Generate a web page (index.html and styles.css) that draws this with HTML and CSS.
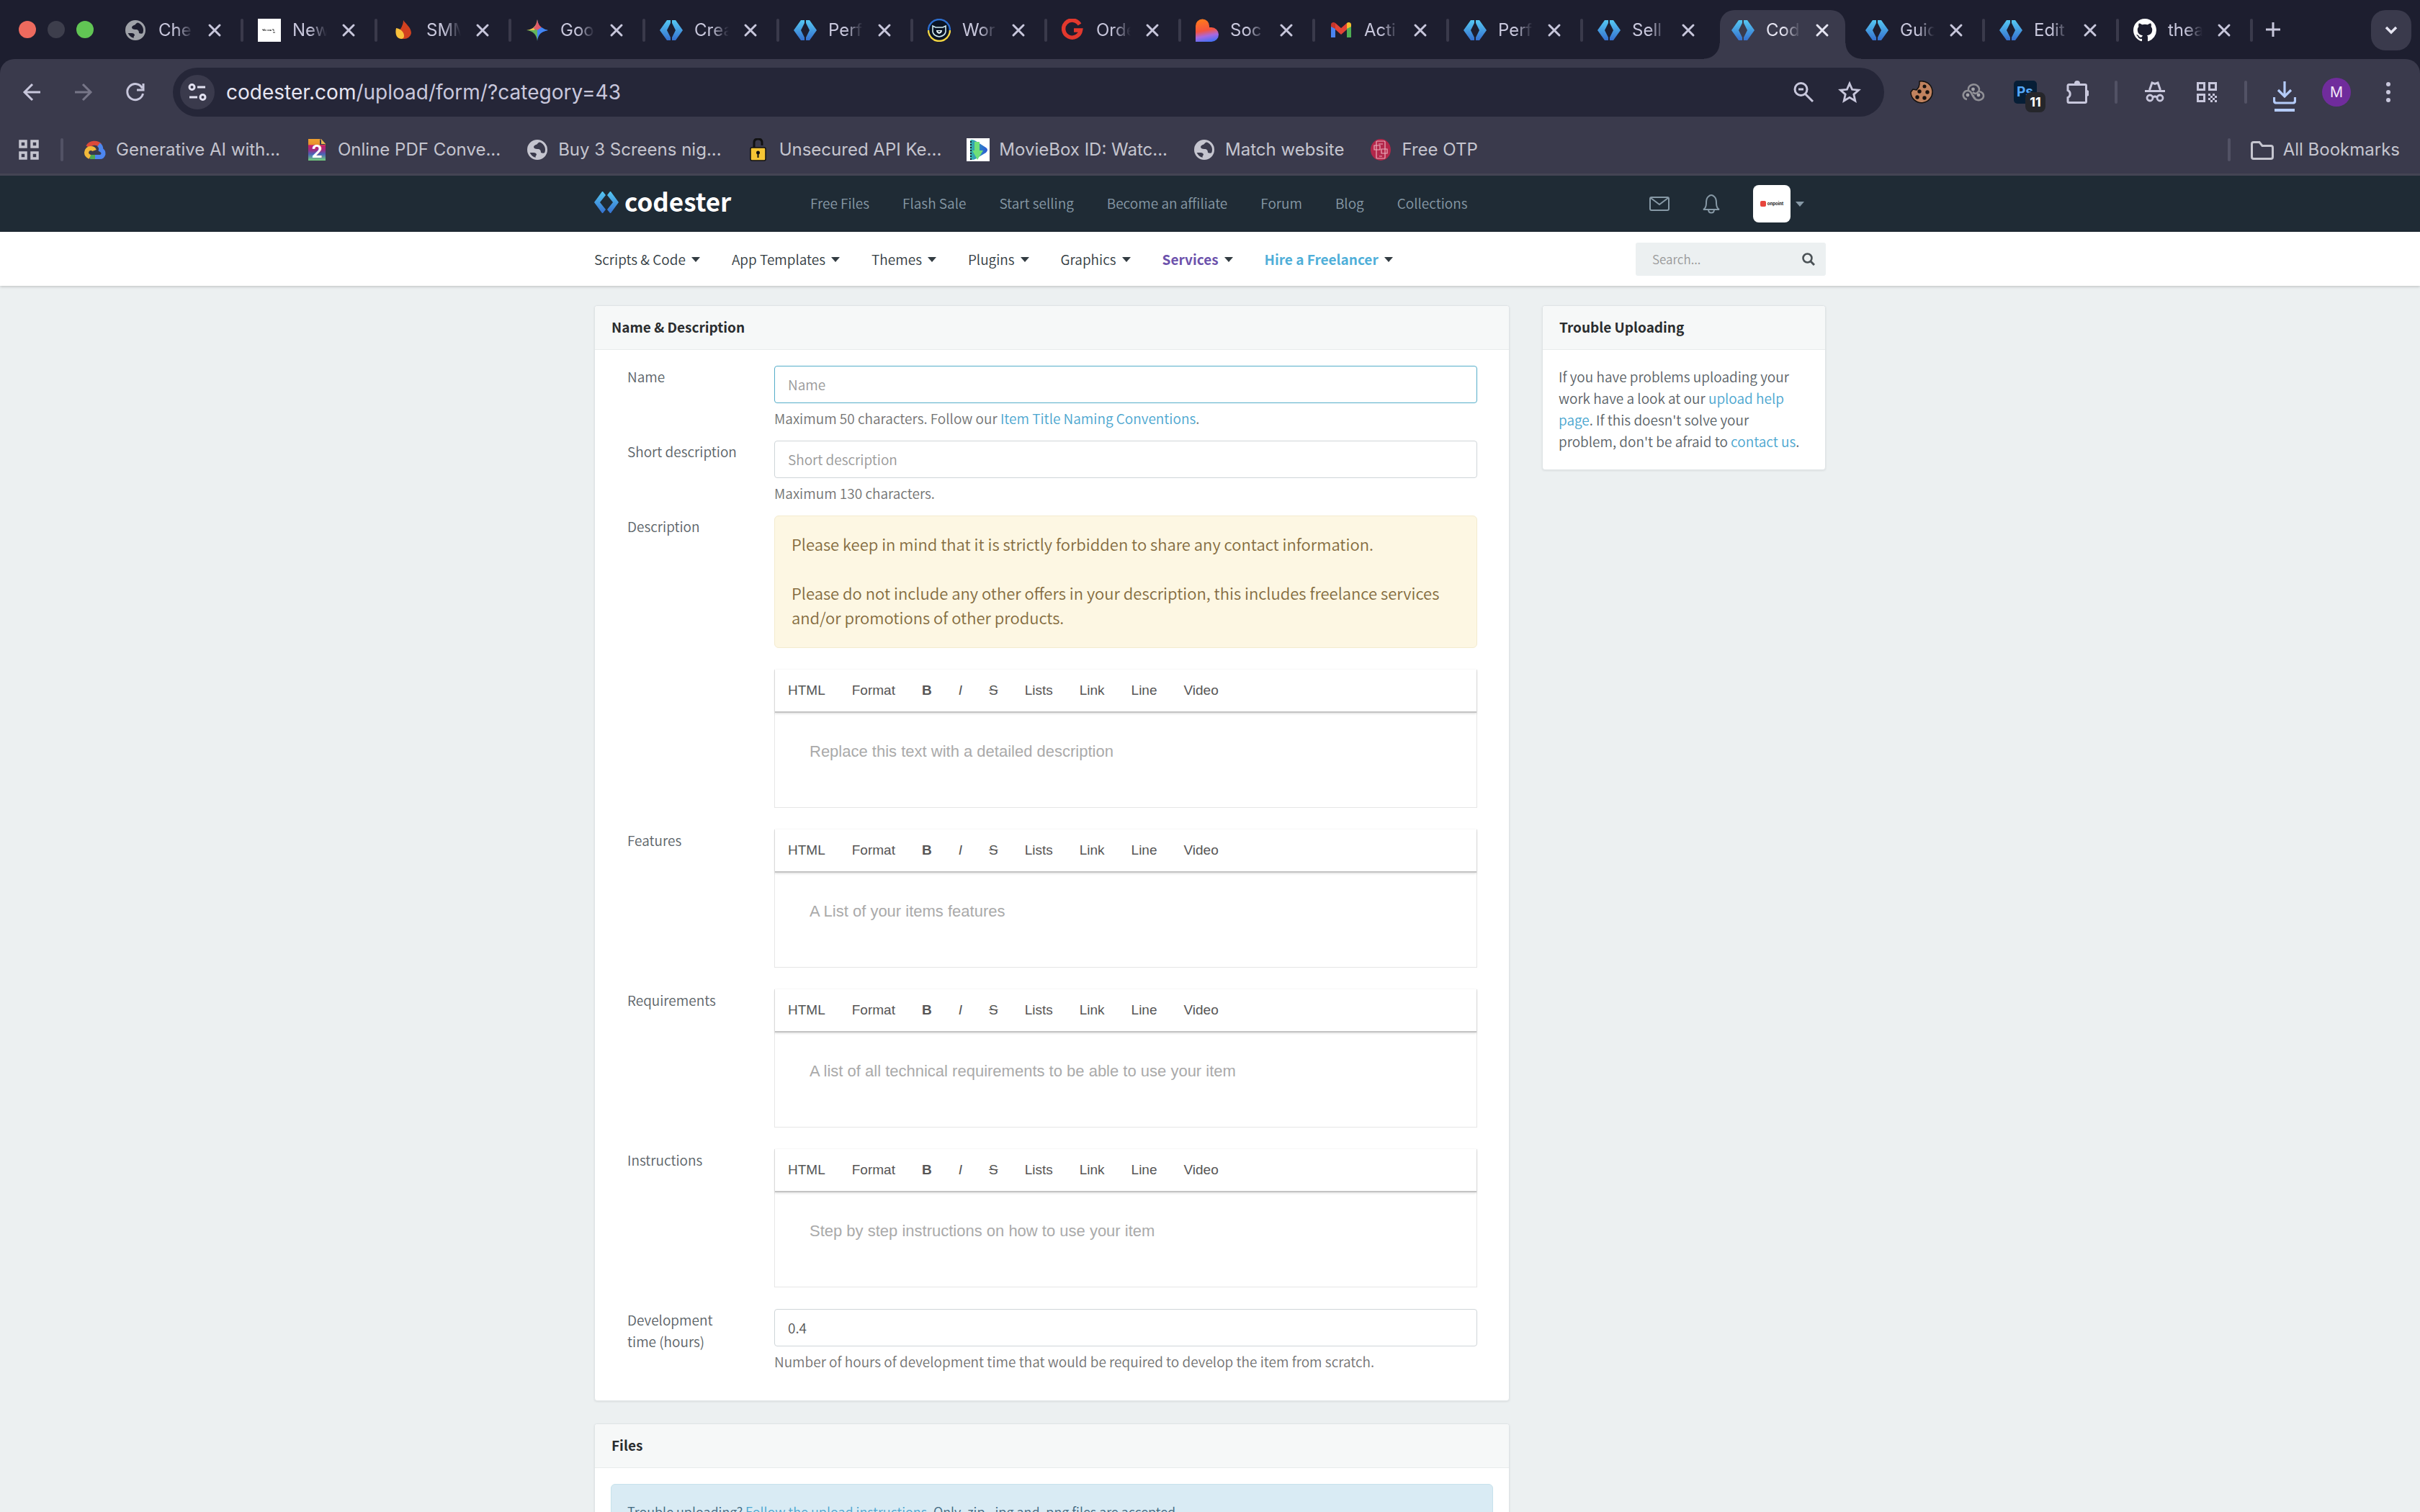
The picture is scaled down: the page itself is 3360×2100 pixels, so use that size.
FILE: index.html
```html
<!DOCTYPE html>
<html lang="en">
<head>
<meta charset="utf-8">
<title>Codester - Upload</title>
<link rel="stylesheet" href="styles.css">
</head>
<body>
<svg class="sprite" width="0" height="0" aria-hidden="true">
  <defs>
    <linearGradient id="g-blue" x1="0" y1="0" x2="0" y2="1"><stop offset="0" stop-color="#55c8f2"/><stop offset="1" stop-color="#3570cf"/></linearGradient>
    <linearGradient id="g-heart" x1="0.3" y1="0" x2="0.5" y2="1"><stop offset="0" stop-color="#ff7a1c"/><stop offset=".5" stop-color="#f5543f"/><stop offset=".75" stop-color="#a868e0"/><stop offset="1" stop-color="#4a70f5"/></linearGradient>
    <linearGradient id="g-pdf" x1="0" y1="0" x2="0" y2="1"><stop offset="0" stop-color="#f0a030"/><stop offset=".25" stop-color="#e8902c"/><stop offset=".3" stop-color="#c81e6a"/><stop offset=".5" stop-color="#a02a80"/><stop offset=".7" stop-color="#4a62b8"/><stop offset="1" stop-color="#74d07c"/></linearGradient>
    <linearGradient id="g-ua" x1="0" y1="0" x2="0" y2="1"><stop offset=".5" stop-color="#2d6fd0"/><stop offset=".5" stop-color="#f5d742"/></linearGradient>
    <linearGradient id="g-movie" x1="0" y1="0" x2="1" y2="0"><stop offset="0" stop-color="#35b7a8"/><stop offset="1" stop-color="#2b58d8"/></linearGradient>
    <symbol id="globe" viewBox="0 0 32 32"><circle cx="16" cy="16" r="12.5" fill="none" stroke="currentColor" stroke-width="3"/><path fill="currentColor" d="M3 14C5 7 10 3 16 3l4 1c-1 2-3 2-4 4-1 1-4 1-5 4 0 2 2 3 5 3 4 0 5 2 5 5 2 1 4 1 6 0-2 5-6 8-12 8-2-1-2-3 0-5 0-2-2-3-4-3H5c-2-2-2-4-2-6z"/></symbol>
    <symbol id="cheap" viewBox="0 0 32 32"><rect width="32" height="32" fill="#fff"/><path d="M6 15q3 0 2 2M9 14v3M11 15v2M13 16h5v1M18 15v2M20 15h2v2M21 19h3" fill="none" stroke="#333" stroke-width="1"/></symbol>
    <symbol id="flame" viewBox="0 0 32 32"><path d="M16 2c3 5 11 10 11 18a10 9 0 0 1-11 8C9 28 7 24 10 18c2-4 6-9 6-16z" fill="#d2411f"/><path d="M6 13c6 1 11 5 11 11 0 2-1 3-3 4-7 0-10-6-8-15z" fill="#f9c13c"/></symbol>
    <symbol id="gem" viewBox="0 0 32 32"><path d="M16 1c1 9 6 14 15 15-9 1-14 6-15 15z" fill="#4285f4"/><path d="M16 1C15 10 10 15 1 16c9 1 14 6 15 15z" fill="#63b45b"/><path d="M16 1C15 10 10 15 1 16h11z" fill="#f3c14a"/><path d="M16 1c-1 7-3 10-6 12l6 3 6-4c-4-3-5-6-6-11z" fill="#e05a6a"/><path d="M16 16 22 12c3 2 5 3 9 4-4 1-8 2-10 4l-5 2z" fill="#4285f4"/></symbol>
    <symbol id="code" viewBox="0 0 32 32"><path d="M10 2h5v4l-5 10 5 10v4h-5L0 16zM22 2h-5v4l5 10-5 10v4h5l10-14z" fill="url(#g-blue)"/></symbol>
    <symbol id="brackets" viewBox="0 0 34 30"><path d="M11 0h1l4 5-8 10 8 10-4 5h-1L0 15zM23 0h-1l-4 5 8 10-8 10 4 5h1l11-15z" fill="url(#g-blue)"/></symbol>
    <symbol id="bear" viewBox="0 0 32 32"><circle cx="16" cy="16" r="15" fill="#0a1424" stroke="url(#g-ua)" stroke-width="2.4"/><path d="M7 10l4 2h10l4-2v8q-1 6-9 7-8-1-9-7z" fill="none" stroke="#cfeaf0" stroke-width="1.6"/><path d="M12 16h8q0 4-4 5-4-1-4-5z" fill="#e6f6f8"/><path d="M14 17h4l-2 2z" fill="#0a1424"/></symbol>
    <symbol id="gred" viewBox="0 0 32 32"><path d="M25 8A12 12 0 1 0 26.500 16H17" fill="none" stroke="#e2382d" stroke-width="5.500"/></symbol>
    <symbol id="heart" viewBox="0 0 32 32"><path d="M0 32V10a9.500 9.500 0 0 1 19 0v2h3a10 10 0 0 1 0 20z" fill="url(#g-heart)"/></symbol>
    <symbol id="gmail" viewBox="0 0 32 32"><path d="M2 8v18h6V14z" fill="#4a84f0"/><path d="M30 8v18h-6V14z" fill="#4fae54"/><path d="M2 8c0-3 4-4 6-2v8L2 11z" fill="#c5352b"/><path d="M8 6l8 7 8-7v9l-8 7-8-7z" fill="#e34335"/><path d="M30 8c0-3-4-4-6-2v8l6-3z" fill="#f4bd2e"/></symbol>
    <symbol id="github" viewBox="0 0 24 24"><path fill="#fff" d="M12 0C5.370 0 0 5.370 0 12c0 5.300 3.440 9.800 8.200 11.390.6.110.82-.26.82-.58v-2.030c-3.340.73-4.040-1.610-4.040-1.610-.55-1.390-1.330-1.760-1.330-1.760-1.090-.74.080-.73.080-.73 1.200.080 1.840 1.240 1.840 1.240 1.070 1.830 2.810 1.300 3.490.99.110-.78.420-1.300.76-1.600-2.660-.3-5.470-1.330-5.470-5.930 0-1.310.47-2.380 1.240-3.220-.13-.3-.54-1.520.12-3.180 0 0 1-.32 3.300 1.230a11.500 11.500 0 0 1 6 0c2.300-1.550 3.300-1.230 3.300-1.230.66 1.660.25 2.880.12 3.180.77.840 1.230 1.910 1.230 3.220 0 4.610-2.800 5.620-5.480 5.920.43.370.81 1.100.81 2.220v3.290c0 .32.220.7.830.58A12 12 0 0 0 24 12C24 5.370 18.630 0 12 0z"/></symbol>
    <symbol id="x" viewBox="0 0 32 32"><path d="m9 9 14 14M23 9 9 23" stroke="currentColor" stroke-width="3" stroke-linecap="round"/></symbol>
    <symbol id="caret" viewBox="0 0 12 7"><path d="M0 0h12L6 7z" fill="currentColor"/></symbol>
  </defs>
</svg>

<div class="browser">
  <div class="tabstrip">
    <div class="lights"><i class="light red"></i><i class="light grey"></i><i class="light green"></i></div>
    <div class="tab"><svg class="fav globe"><use href="#globe"/></svg><span class="tab-title">Che</span><button class="close" aria-label="Close"><svg><use href="#x"/></svg></button></div><i class="tab-sep"></i>
    <div class="tab"><svg class="fav"><use href="#cheap"/></svg><span class="tab-title">New</span><button class="close" aria-label="Close"><svg><use href="#x"/></svg></button></div><i class="tab-sep"></i>
    <div class="tab"><svg class="fav"><use href="#flame"/></svg><span class="tab-title">SMM</span><button class="close" aria-label="Close"><svg><use href="#x"/></svg></button></div><i class="tab-sep"></i>
    <div class="tab"><svg class="fav"><use href="#gem"/></svg><span class="tab-title">Goo</span><button class="close" aria-label="Close"><svg><use href="#x"/></svg></button></div><i class="tab-sep"></i>
    <div class="tab"><svg class="fav"><use href="#code"/></svg><span class="tab-title">Crea</span><button class="close" aria-label="Close"><svg><use href="#x"/></svg></button></div><i class="tab-sep"></i>
    <div class="tab"><svg class="fav"><use href="#code"/></svg><span class="tab-title">Perf</span><button class="close" aria-label="Close"><svg><use href="#x"/></svg></button></div><i class="tab-sep"></i>
    <div class="tab"><svg class="fav"><use href="#bear"/></svg><span class="tab-title">Wor</span><button class="close" aria-label="Close"><svg><use href="#x"/></svg></button></div><i class="tab-sep"></i>
    <div class="tab"><svg class="fav"><use href="#gred"/></svg><span class="tab-title">Orde</span><button class="close" aria-label="Close"><svg><use href="#x"/></svg></button></div><i class="tab-sep"></i>
    <div class="tab"><svg class="fav"><use href="#heart"/></svg><span class="tab-title">Soc</span><button class="close" aria-label="Close"><svg><use href="#x"/></svg></button></div><i class="tab-sep"></i>
    <div class="tab"><svg class="fav"><use href="#gmail"/></svg><span class="tab-title">Acti</span><button class="close" aria-label="Close"><svg><use href="#x"/></svg></button></div><i class="tab-sep"></i>
    <div class="tab"><svg class="fav"><use href="#code"/></svg><span class="tab-title">Perf</span><button class="close" aria-label="Close"><svg><use href="#x"/></svg></button></div><i class="tab-sep"></i>
    <div class="tab"><svg class="fav"><use href="#code"/></svg><span class="tab-title">Sell</span><button class="close" aria-label="Close"><svg><use href="#x"/></svg></button></div><i class="tab-sep clear"></i>
    <div class="tab active"><svg class="fav"><use href="#code"/></svg><span class="tab-title">Cod</span><button class="close" aria-label="Close"><svg><use href="#x"/></svg></button></div><i class="tab-sep clear"></i>
    <div class="tab"><svg class="fav"><use href="#code"/></svg><span class="tab-title">Guid</span><button class="close" aria-label="Close"><svg><use href="#x"/></svg></button></div><i class="tab-sep"></i>
    <div class="tab"><svg class="fav"><use href="#code"/></svg><span class="tab-title">Edit</span><button class="close" aria-label="Close"><svg><use href="#x"/></svg></button></div><i class="tab-sep"></i>
    <div class="tab"><svg class="fav"><use href="#github"/></svg><span class="tab-title">thea</span><button class="close" aria-label="Close"><svg><use href="#x"/></svg></button></div><i class="tab-sep"></i>
    <button class="new-tab" aria-label="New tab"><svg viewBox="0 0 32 32"><path d="M16 6v20M6 16h20" stroke="currentColor" stroke-width="3"/></svg></button>
    <button class="tab-list" aria-label="Search tabs"><svg viewBox="0 0 32 32"><path d="m9 12 7 7 7-7" fill="none" stroke="currentColor" stroke-width="3.500"/></svg></button>
  </div>

  <div class="toolbar">
    <button class="tool" aria-label="Back"><svg viewBox="0 0 32 32"><path d="M28 16H6M17 5 6 16l11 11" fill="none" stroke="currentColor" stroke-width="3"/></svg></button>
    <button class="tool dim" aria-label="Forward"><svg viewBox="0 0 32 32"><path d="M4 16h22M15 5l11 11-11 11" fill="none" stroke="currentColor" stroke-width="3"/></svg></button>
    <button class="tool" aria-label="Reload"><svg viewBox="0 0 32 32"><path d="M25.500 10.500A11 11 0 1 0 26.500 18M27 4v9h-9" fill="none" stroke="currentColor" stroke-width="3"/></svg></button>
    <div class="omnibox">
      <button class="site-info" aria-label="Site information"><svg viewBox="0 0 32 32"><g fill="none" stroke="currentColor" stroke-width="3"><circle cx="8.500" cy="9" r="3.500"/><path d="M16 9h11M5 23h11"/><circle cx="23.500" cy="23" r="3.500"/></g></svg></button>
      <div class="url"><b>codester.com</b>/upload/form/?category=43</div>
      <button class="inner" aria-label="Zoom"><svg viewBox="0 0 32 32"><g fill="none" stroke="currentColor" stroke-width="3"><circle cx="12.500" cy="12" r="8.500"/><path d="M9 12h7M18.500 18.500 29 29"/></g></svg></button>
      <button class="inner" aria-label="Bookmark"><svg viewBox="0 0 32 32"><path d="m16 4 3.600 8.300 9 .8-6.800 6 2 8.900L16 23.300 8.200 28l2-8.900-6.800-6 9-.8z" fill="none" stroke="currentColor" stroke-width="2.800"/></svg></button>
    </div>
    <button class="tool" aria-label="Cookie"><svg viewBox="0 0 32 32"><path d="M13 1a15 15 0 1 1-12 15l3-4 5 1 3-4 1-4z" fill="#c0825e" stroke="#14110f" stroke-width="1.500"/><g fill="#17120f"><circle cx="20" cy="8" r="2.500"/><circle cx="13" cy="15" r="2.700"/><circle cx="24" cy="16" r="2.700"/><circle cx="10" cy="23" r="2.700"/><circle cx="20" cy="24" r="2.700"/></g></svg></button>
    <button class="tool" aria-label="Clouds"><svg viewBox="0 0 32 32"><g fill="none" stroke="#909096" stroke-width="2.600"><path d="M9 13a7.500 6.500 0 1 1 12 4q-3 2-6-1"/><path d="M7 26a6 6 0 1 1 6-9q3 7 6 8"/><path d="M16 20a7 6 0 1 0 8-5"/></g><g fill="#a5a5aa"><circle cx="15.500" cy="12" r="2.400"/><circle cx="8" cy="20" r="2.400"/><circle cx="23" cy="20" r="2.400"/></g></svg></button>
    <button class="tool ps" aria-label="Extension"><span class="ps-box">Ps</span><span class="badge">11</span></button>
    <button class="tool" aria-label="Extensions"><svg viewBox="0 0 32 32"><path d="M5 5.500h22a1.500 1.500 0 0 1 1.500 1.500v22a1.500 1.500 0 0 1-1.500 1.500H4.500A1.500 1.500 0 0 1 3 29v-5.500a5.500 5.500 0 0 0 0-10V7a1.500 1.500 0 0 1 2-1.500z" fill="none" stroke="currentColor" stroke-width="3"/><path d="M12 4a4 4 0 0 1 8 0zM29 13a4 4 0 0 1 0 9z" fill="currentColor"/></svg></button>
    <i class="bar-sep"></i>
    <button class="tool" aria-label="Incognito"><svg viewBox="0 0 32 32"><path d="M2 14.500h28" stroke="currentColor" stroke-width="3"/><path d="M8.500 13 12 3l4 1.500L20 3l3.500 10" fill="none" stroke="currentColor" stroke-width="3"/><g fill="none" stroke="currentColor" stroke-width="2.800"><circle cx="9" cy="24" r="4"/><circle cx="23" cy="24" r="4"/><path d="M13 23q3-2 6 0"/></g></svg></button>
    <button class="tool" aria-label="QR code"><svg viewBox="0 0 32 32"><g fill="none" stroke="currentColor" stroke-width="3"><path d="M3.500 3.500h9v9h-9zM19.500 3.500h9v9h-9zM3.500 19.500h9v9h-9z"/></g><path fill="currentColor" d="M18 18h3v3h-3zM24 18h3v3h-3zM21 21h3v3h-3zM27 21h3v3h-3zM18 24h3v3h-3zM24 24h3v3h-3zM21 27h3v3h-3zM27 27h3v3h-3z"/></svg></button>
    <i class="bar-sep"></i>
    <button class="tool" aria-label="Downloads"><svg class="download" viewBox="0 0 32 44"><path d="M16 1v20M7 13l9 9 9-9M1.500 23v5q0 3 3 3h23q3 0 3-3v-5" fill="none" stroke="#b4cbf8" stroke-width="3.200"/><path d="M2 39h28v4H2z" fill="#b4cbf8"/></svg></button>
    <button class="tool" aria-label="Profile"><span class="profile">M</span></button>
    <button class="tool" aria-label="Menu"><svg viewBox="0 0 32 32"><g fill="currentColor"><circle cx="16" cy="5" r="3"/><circle cx="16" cy="16" r="3"/><circle cx="16" cy="27" r="3"/></g></svg></button>
  </div>

  <nav class="bookmarks" aria-label="Bookmarks">
    <svg class="ico" viewBox="0 0 32 32"><path d="M4 4h8v8H4zM20 4h8v8h-8zM4 20h8v8H4zM20 20h8v8h-8z" fill="none" stroke="currentColor" stroke-width="3.500"/></svg>
    <i class="bar-sep"></i>
    <div class="marks">
      <a class="mark" href="#"><svg class="ico" viewBox="0 0 32 32"><g fill="none" stroke-width="6"><path d="M6 12a10.500 10 0 0 1 17-2" stroke="#dc4a3a"/><path d="M21 9q4 3 3 7 4 2 3.500 6-1 4-5 4H16" stroke="#4d86f0"/><path d="M16 26H9" stroke="#4fa851"/><path d="M9 26q-5-2-5-6 1-6 6-6 4 0 5 3" stroke="#f2b93b"/></g></svg><span>Generative AI with...</span></a>
      <a class="mark" href="#"><svg class="ico" viewBox="0 0 32 32"><path d="M4 1h17l7 7v23H4z" fill="url(#g-pdf)"/><path d="M20 1l8 8h-8z" fill="#3a3a4c"/><path d="M22 1l6 7h-6z" fill="#e8b850"/><text x="16" y="27" text-anchor="middle" class="pdf-two">2</text></svg><span>Online PDF Conve...</span></a>
      <a class="mark" href="#"><svg class="ico"><use href="#globe"/></svg><span>Buy 3 Screens nig...</span></a>
      <a class="mark" href="#"><svg class="ico" viewBox="0 0 32 32"><path d="M10 14V6q0-5 5.500-5T21 6v4" fill="none" stroke="#111" stroke-width="3"/><rect x="5" y="13" width="21" height="18" rx="2" fill="#f5c535" stroke="#111" stroke-width="1.500"/><circle cx="15.500" cy="20" r="2.500" fill="#111"/><path d="M14.500 20h2v7h-2z" fill="#111"/></svg><span>Unsecured API Ke...</span></a>
      <a class="mark" href="#"><svg class="ico" viewBox="0 0 32 32"><path d="M0 0h32v32H0z" fill="#fff"/><path d="M7 2q3 0 6 2l14 9q4 3 0 7L12 29q-4 2-7 0V4q0-2 2-2z" fill="url(#g-movie)"/><path d="M6 4v26" stroke="#123" stroke-width="2" stroke-dasharray="2 2"/><path d="M11 5h7v12h5l-8 13-7-13h3z" fill="#6fdf78"/></svg><span>MovieBox ID: Watc...</span></a>
      <a class="mark" href="#"><svg class="ico"><use href="#globe"/></svg><span>Match website</span></a>
      <a class="mark" href="#"><svg class="ico" viewBox="0 0 32 32"><ellipse cx="16" cy="16" rx="14" ry="15" fill="#b3274a"/><g fill="none" stroke="#ecaebc" stroke-width="1.200"><rect x="10" y="4" width="12" height="24" rx="1"/><path d="M13 8h6M7 10h8v6H7zM17 15h8v6h-8zM14 25h4"/></g></svg><span>Free OTP</span></a>
    </div>
    <i class="bar-sep"></i>
    <a class="mark all" href="#"><svg class="ico" viewBox="0 0 32 32"><path d="M4 5.500h8l4 5h12q2.500 0 2.500 2.500v13q0 2.500-2.500 2.500H4q-2.500 0-2.500-2.500V8q0-2.500 2.500-2.500z" fill="none" stroke="currentColor" stroke-width="3"/></svg><span>All Bookmarks</span></a>
  </nav>

  <div class="site">
    <header class="topbar">
      <div class="wrap">
        <a class="logo" href="#"><svg><use href="#brackets"/></svg><span>codester</span></a>
        <nav class="top-links" aria-label="Site"><a href="#">Free Files</a><a href="#">Flash Sale</a><a href="#">Start selling</a><a href="#">Become an affiliate</a><a href="#">Forum</a><a href="#">Blog</a><a href="#">Collections</a></nav>
        <div class="user">
          <button aria-label="Messages"><svg class="mail" viewBox="0 0 28 20"><path d="M3 1h22q2 0 2 2v14q0 2-2 2H3q-2 0-2-2V3q0-2 2-2zM2 2l12 9L26 2" fill="none" stroke="currentColor" stroke-width="2"/></svg></button>
          <button aria-label="Notifications"><svg class="bell" viewBox="0 0 24 28"><path d="M1 22q4-2 4-9 0-7 3-9 4-4 8 0 3 2 3 9 0 7 4 9zM8 22q0 4.500 4 4.500t4-4.500" fill="none" stroke="currentColor" stroke-width="2"/></svg></button>
          <button class="account" aria-label="Account"><span class="account-pic"><i></i>onpoint</span><svg class="caret"><use href="#caret"/></svg></button>
        </div>
      </div>
    </header>
    <div class="catbar">
      <div class="wrap">
        <nav class="cats" aria-label="Categories">
          <a href="#">Scripts &amp; Code<svg class="caret"><use href="#caret"/></svg></a>
          <a href="#">App Templates<svg class="caret"><use href="#caret"/></svg></a>
          <a href="#">Themes<svg class="caret"><use href="#caret"/></svg></a>
          <a href="#">Plugins<svg class="caret"><use href="#caret"/></svg></a>
          <a href="#">Graphics<svg class="caret"><use href="#caret"/></svg></a>
          <a href="#" class="purple">Services<svg class="caret"><use href="#caret"/></svg></a>
          <a href="#" class="blue">Hire a Freelancer<svg class="caret"><use href="#caret"/></svg></a>
        </nav>
        <form class="search"><input type="text" placeholder="Search..." aria-label="Search"><button type="button" aria-label="Search"><svg viewBox="0 0 18 18"><circle cx="7.500" cy="7.500" r="6" fill="none" stroke="currentColor" stroke-width="2.600"/><path d="m12 12 5 5" stroke="currentColor" stroke-width="3"/></svg></button></form>
      </div>
    </div>

    <div class="wrap page">
      <main class="main">
        <section class="panel">
          <h2>Name &amp; Description</h2>
          <form class="form">
            <div class="row"><label for="name">Name</label><div class="field"><input id="name" class="text focused" type="text" placeholder="Name"><p class="help">Maximum 50 characters. Follow our <a href="#">Item Title Naming Conventions</a>.</p></div></div>
            <div class="row"><label for="short">Short description</label><div class="field"><input id="short" class="text" type="text" placeholder="Short description"><p class="help">Maximum 130 characters.</p></div></div>
            <div class="row tall"><label for="desc">Description</label><div class="field">
              <div class="notice"><p>Please keep in mind that it is strictly forbidden to share any contact information.</p><p>Please do not include any other offers in your description, this includes freelance services and/or promotions of other products.</p></div>
              <div class="editor"><div class="ed-tools"><button type="button">HTML</button><button type="button">Format</button><button type="button"><b>B</b></button><button type="button"><i>I</i></button><button type="button"><s>S</s></button><button type="button">Lists</button><button type="button">Link</button><button type="button">Line</button><button type="button">Video</button></div><textarea id="desc" placeholder="Replace this text with a detailed description"></textarea></div>
            </div></div>
            <div class="row tall"><label for="feat">Features</label><div class="field">
              <div class="editor"><div class="ed-tools"><button type="button">HTML</button><button type="button">Format</button><button type="button"><b>B</b></button><button type="button"><i>I</i></button><button type="button"><s>S</s></button><button type="button">Lists</button><button type="button">Link</button><button type="button">Line</button><button type="button">Video</button></div><textarea id="feat" placeholder="A List of your items features"></textarea></div>
            </div></div>
            <div class="row tall"><label for="req">Requirements</label><div class="field">
              <div class="editor"><div class="ed-tools"><button type="button">HTML</button><button type="button">Format</button><button type="button"><b>B</b></button><button type="button"><i>I</i></button><button type="button"><s>S</s></button><button type="button">Lists</button><button type="button">Link</button><button type="button">Line</button><button type="button">Video</button></div><textarea id="req" placeholder="A list of all technical requirements to be able to use your item"></textarea></div>
            </div></div>
            <div class="row tall"><label for="inst">Instructions</label><div class="field">
              <div class="editor"><div class="ed-tools"><button type="button">HTML</button><button type="button">Format</button><button type="button"><b>B</b></button><button type="button"><i>I</i></button><button type="button"><s>S</s></button><button type="button">Lists</button><button type="button">Link</button><button type="button">Line</button><button type="button">Video</button></div><textarea id="inst" placeholder="Step by step instructions on how to use your item"></textarea></div>
            </div></div>
            <div class="row"><label for="hours">Development time (hours)</label><div class="field"><input id="hours" class="text" type="text" value="0.4"><p class="help">Number of hours of development time that would be required to develop the item from scratch.</p></div></div>
          </form>
        </section>
        <section class="panel">
          <h2>Files</h2>
          <div class="files"><p class="info">Trouble uploading? <a href="#">Follow the upload instructions</a>. Only .zip, .jpg and .png files are accepted.</p></div>
        </section>
      </main>
      <aside class="panel side">
        <h2>Trouble Uploading</h2>
        <p>If you have problems uploading your work have a look at our <a href="#">upload help page</a>. If this doesn't solve your problem, don't be afraid to <a href="#">contact us</a>.</p>
      </aside>
    </div>
  </div>
</div>
</body>
</html>
```
FILE: styles.css
```css
* { box-sizing: border-box; }
body { margin: 0; background: #1d1e2f; }
button { margin: 0; padding: 0; border: 0; background: none; color: inherit; font: inherit; }
a { color: inherit; text-decoration: none; }
p, h2 { margin: 0; }
svg { display: block; flex: none; }
.sprite { position: absolute; }

.browser {
  display: flex;
  flex-direction: column;
  height: 100vh;
  overflow: hidden;
  font-family: Inter, "Liberation Sans", sans-serif;
  color: #c8c7dc;
}

/* Tab strip */
.tabstrip { display: flex; align-items: flex-end; height: 82px; flex: none; padding-right: 12px; }
.lights { display: flex; gap: 16px; width: 156px; padding-left: 26px; height: 82px; align-items: center; flex: none; }
.light { width: 24px; height: 24px; border-radius: 50%; }
.red { background: #ed6a5e; }
.grey { background: #3d3e4c; }
.green { background: #61c554; }
.tab {
  display: flex;
  align-items: center;
  flex: 0 1 174px;
  min-width: 0;
  height: 68px;
  padding: 0 16px 12px;
  border-radius: 20px 20px 0 0;
}
.fav { width: 32px; height: 32px; margin-right: 16px; }
.fav.globe { color: #9fa2a8; }
.tab-title {
  flex: 1 1 0;
  min-width: 0;
  overflow: hidden;
  white-space: nowrap;
  font-size: 24px;
  line-height: 32px;
  margin-right: 14px;
  mask-image: linear-gradient(to right, #000 50%, transparent);
}
.close, .close svg { width: 32px; height: 32px; flex: none; }
.tab-sep { width: 4px; height: 32px; margin: 0 4px 24px; background: #3a3a4b; border-radius: 2px; flex: none; }
.tab-sep.clear { background: none; }
.tab.active { position: relative; background: #3a3a4c; color: #e6e5f2; }
.tab.active::before, .tab.active::after { content: ""; position: absolute; bottom: 0; width: 22px; height: 22px; }
.tab.active::before { right: 100%; background: radial-gradient(circle at 0 0, transparent 21px, #3a3a4c 22px); }
.tab.active::after { left: 100%; background: radial-gradient(circle at 100% 0, transparent 21px, #3a3a4c 22px); }
.new-tab { width: 48px; height: 82px; display: grid; place-items: center; }
.new-tab svg, .tab-list svg { width: 32px; height: 32px; }
.tab-list { width: 56px; height: 56px; margin: 0 0 12px auto; border-radius: 20px; background: #3a3a4c; display: grid; place-items: center; color: #e6e5f2; }

/* Toolbar */
.toolbar {
  display: flex;
  align-items: center;
  gap: 24px;
  height: 92px;
  flex: none;
  padding: 0 20px;
  background: #3a3a4c;
  border-radius: 20px 20px 0 0;
}
.tool { width: 48px; height: 48px; display: grid; place-items: center; flex: none; }
.tool svg { width: 32px; height: 32px; }
.tool svg.download { height: 44px; margin-top: 8px; }
.dim { color: #777688; }
.omnibox { display: flex; align-items: center; flex: 1; height: 68px; margin: 0 4px; padding: 0 32px 0 10px; border-radius: 34px; background: #252638; }
.site-info { width: 48px; height: 48px; border-radius: 50%; background: #3a3a4c; display: grid; place-items: center; color: #e2e1f0; flex: none; }
.site-info svg, .inner svg { width: 32px; height: 32px; }
.url { flex: 1; padding-left: 16px; font-size: 28px; line-height: 40px; white-space: nowrap; }
.url b { font-weight: 400; color: #e6e5f2; }
.inner { width: 32px; margin-left: 32px; }
.bar-sep { width: 4px; height: 32px; margin: 0 4px; border-radius: 2px; background: #525265; flex: none; }
.ps { position: relative; }
.ps-box { width: 32px; height: 32px; border-radius: 5px; background: #071e36; color: #55a8fa; font: 700 19px/32px Inter, sans-serif; text-align: left; padding-left: 4px; }
.badge { position: absolute; left: 24px; top: 24px; width: 28px; height: 28px; border-radius: 8px; background: #25262b; color: #fff; font: 700 18px/28px Inter, sans-serif; text-align: center; }
.profile { width: 40px; height: 40px; border-radius: 50%; background: #702c9c; color: #f3e8fa; font-size: 20px; line-height: 40px; text-align: center; }

/* Bookmarks bar */
.bookmarks {
  display: flex;
  align-items: center;
  gap: 24px;
  height: 70px;
  flex: none;
  padding: 0 28px 0 24px;
  background: #3a3a4c;
  border-bottom: 3px solid #444453;
  color: #c5c5cf;
}
.ico { width: 32px; height: 32px; }
.marks { display: flex; gap: 35px; flex: 1; }
.mark { display: flex; align-items: center; gap: 13px; font-size: 24px; line-height: 32px; white-space: nowrap; }
.pdf-two { font: 700 24px Inter, sans-serif; fill: #fff; }

/* Site */
.site {
  flex: 1;
  min-height: 0;
  overflow: hidden;
  background: #ecf0f1;
  color: #5b6368;
  font-family: "Noto Sans CJK JP", "Open Sans", sans-serif;
  font-size: 19px;
  font-weight: 350;
  line-height: 30px;
}
.wrap { max-width: 1710px; margin: 0 auto; }
.topbar { background: #1f2b35; color: #8799a6; }
.topbar .wrap { display: flex; align-items: center; height: 78px; }
.logo { display: flex; align-items: center; gap: 8px; width: 300px; padding-bottom: 4px; color: #fff; font-weight: 700; font-size: 35px; line-height: 40px; }
.logo svg { width: 34px; height: 30px; }
.logo span { padding-bottom: 5px; }
.top-links { display: flex; gap: 46px; flex: 1; padding-bottom: 3px; }
.user { display: flex; align-items: center; gap: 46px; padding-right: 30px; }
.mail { width: 28px; height: 20px; }
.bell { width: 24px; height: 28px; }
.caret { width: 12px; height: 7px; }
.account { display: flex; align-items: center; gap: 7px; }
.account-pic { display: flex; align-items: center; justify-content: center; gap: 2px; width: 52px; height: 52px; border-radius: 8px; background: #fff; color: #222; font: 700 6px/10px Inter, sans-serif; }
.account-pic i { width: 8px; height: 8px; border-radius: 2px; background: #e8453c; }
.catbar { background: #fff; box-shadow: 0 1px 4px rgba(0, 0, 0, .22); position: relative; color: #333c42; }
.catbar .wrap { display: flex; align-items: center; justify-content: space-between; height: 75px; }
.cats { display: flex; gap: 44px; }
.cats a { display: flex; align-items: center; gap: 8px; }
.cats .caret { color: #333c42; margin-top: 2px; }
.purple { color: #6c52ac; font-weight: 700; }
.blue { color: #4fafd9; font-weight: 700; }
.search { display: flex; align-items: center; width: 264px; height: 46px; border-radius: 3px; background: #ecf0f1; }
.search input { flex: 1; min-width: 0; height: 46px; border: 0; padding: 0 0 0 23px; background: none; font: 350 17px/30px "Noto Sans CJK JP", sans-serif; }
.search button { width: 18px; margin-right: 15px; }
.search svg { width: 18px; height: 18px; color: #4b5256; }
::placeholder { color: #999; opacity: 1; }

.page { display: grid; grid-template-columns: minmax(0, 1fr) 394px; gap: 45px; align-items: start; padding-top: 27px; }
.main { display: grid; gap: 31px; }
.panel { background: #fff; border: 1px solid #dfe4e6; border-radius: 4px; box-shadow: 0 1px 3px rgba(0, 0, 0, .08); }
.panel h2 { padding: 14px 23px 16px; background: #f6f8f8; border-bottom: 1px solid #e8ecec; border-radius: 4px 4px 0 0; color: #2a2d2f; font-size: 19px; font-weight: 700; line-height: 30px; }
.panel a { color: #4ba6cf; }
.side p { padding: 22px 30px 24px 22px; }
.form { padding: 22px 44px 23px 45px; }
.row { display: grid; grid-template-columns: 204px minmax(0, 1fr); margin-bottom: 16px; }
.row label { padding-right: 50px; }
.row.tall { margin-bottom: 30px; }
.text { display: block; width: 100%; height: 52px; padding: 0 18px 2px; border: 1px solid #cfd5d8; border-radius: 4px; background: #fff; color: #555; font: 350 19px/30px "Noto Sans CJK JP", sans-serif; }
.text.focused { border-color: #55adc9; }
.help { margin-top: 6px; color: #737373; }
.notice { display: grid; gap: 34px; padding: 21px 23px 25px; margin-bottom: 30px; border: 1px solid #f3ebcf; border-radius: 6px; background: #fdf7e3; color: #846c40; font-size: 22px; line-height: 34px; }
.editor { font-family: "Liberation Sans", Arial, sans-serif; font-weight: 400; border: 1px solid #e6e6e6; border-top: 0; }
.ed-tools { display: flex; gap: 1px; height: 60px; border-bottom: 2px solid #c4c4c4; box-shadow: 0 1px 3px rgba(0, 0, 0, .15); color: #555; font-size: 19px; line-height: 30px; }
.ed-tools button { padding: 0 18px; }
textarea { display: block; width: 100%; height: 131px; padding: 38px 48px; border: 0; resize: none; font: 22px/32px "Liberation Sans", Arial, sans-serif; background: none; }
textarea::placeholder { color: #aaa; }
.files { padding: 22px; }
.info { padding: 22px; border: 1px solid #c7e2ec; border-radius: 6px; background: #d9ebf4; color: #40687f; font-size: 18px; }
```
